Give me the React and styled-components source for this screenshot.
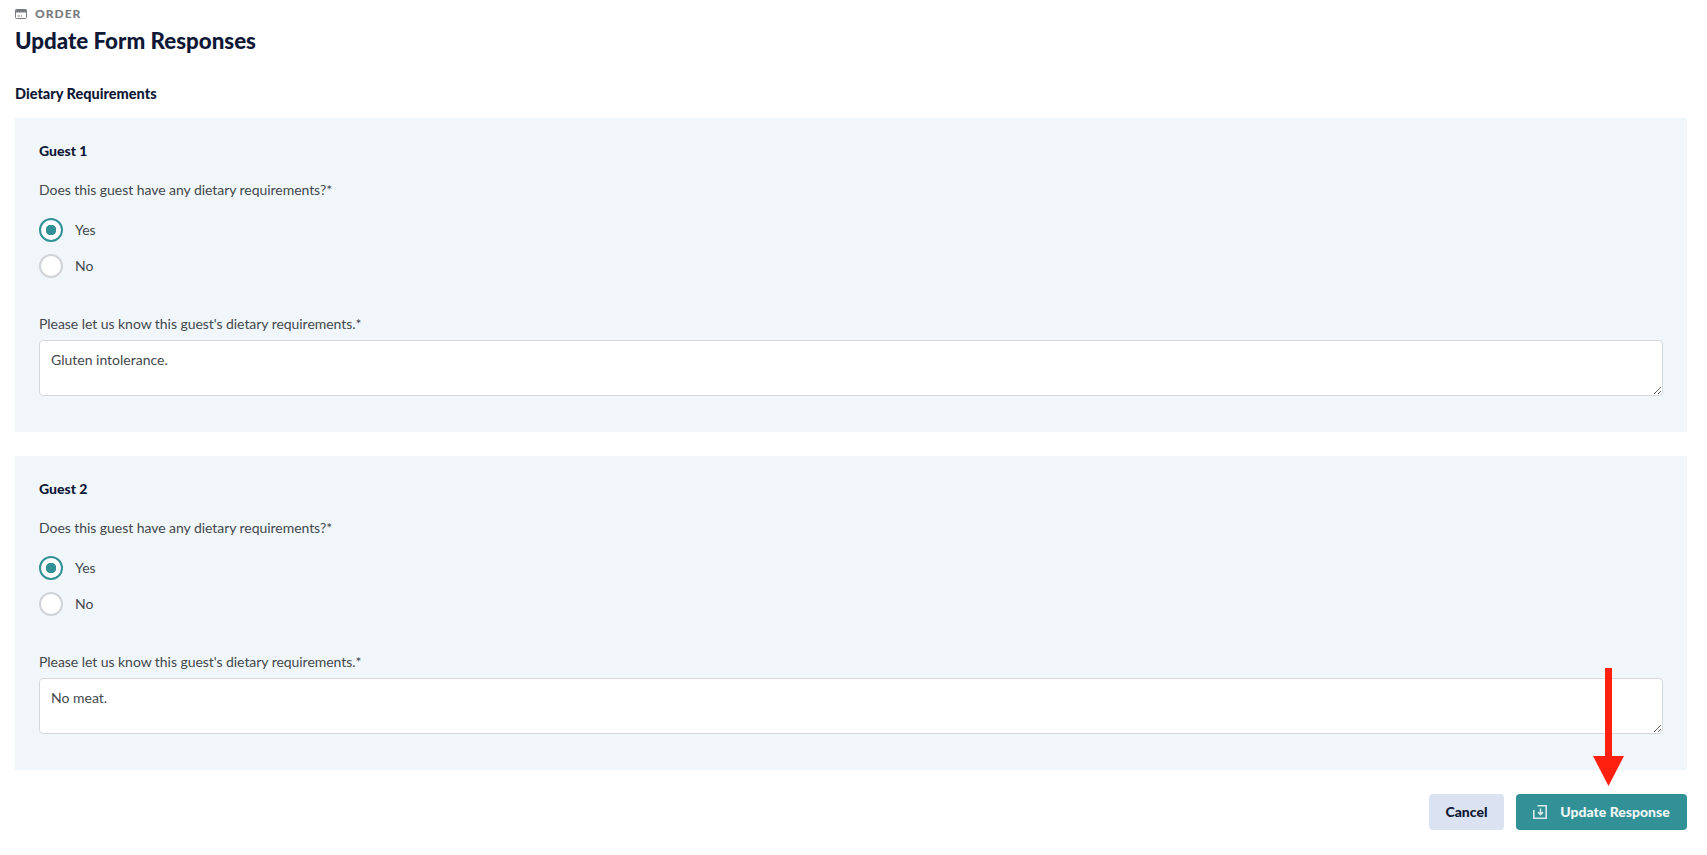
import React from 'react';
import styled, { createGlobalStyle } from 'styled-components';

const GlobalStyle = createGlobalStyle`
  html, body {
    margin: 0;
    padding: 0;
    background: #fff;
    font-family: 'Lato', sans-serif;
  }
`;

const guests = [
  { name: 'Guest 1', answer: 'Gluten intolerance.' },
  { name: 'Guest 2', answer: 'No meat.' },
];

function OrderIcon() {
  return (
    <svg width="12" height="10" viewBox="0 0 12 10" fill="none">
      <rect x="0.5" y="0.5" width="11" height="9" rx="1" stroke="#777b80" />
      <rect x="0.5" y="0.5" width="11" height="3" fill="#777b80" />
      <path d="M2.5 7h2.5M6 7h1" stroke="#777b80" />
    </svg>
  );
}

function SaveIcon() {
  return (
    <svg width="14" height="14" viewBox="0 0 14 14" fill="none" stroke="#d8eaeb" strokeWidth="1.6">
      <path d="M4.5 .8h8.7v12.4H.8V5" />
      <path d="M7.5 3.5v6M5 7.2l2.5 2.4L10 7.2" />
    </svg>
  );
}

function Radio({ label, checked }) {
  return (
    <RadioRow>
      <RadioCircle $checked={checked} />
      <RadioLabel>{label}</RadioLabel>
    </RadioRow>
  );
}

function GuestCard({ name, answer }) {
  return (
    <Card>
      <GuestName>{name}</GuestName>
      <Label>Does this guest have any dietary requirements?*</Label>
      <RadioGroup>
        <Radio label="Yes" checked />
        <Radio label="No" />
      </RadioGroup>
      <Label>Please let us know this guest's dietary requirements.*</Label>
      <Answer defaultValue={answer} />
    </Card>
  );
}

export default function App() {
  return (
    <Page>
      <GlobalStyle />
      <Eyebrow>
        <OrderIcon />
        <span>ORDER</span>
      </Eyebrow>
      <Title>Update Form Responses</Title>
      <SectionTitle>Dietary Requirements</SectionTitle>
      <Cards>
        {guests.map((guest) => (
          <GuestCard key={guest.name} name={guest.name} answer={guest.answer} />
        ))}
      </Cards>
      <Actions>
        <CancelButton>Cancel</CancelButton>
        <SubmitButton>
          <SaveIcon />
          <span>Update Response</span>
        </SubmitButton>
        <Arrow viewBox="0 0 31 118" width="31" height="118">
          <rect x="12" y="0" width="7" height="90" fill="#ff2010" />
          <polygon points="0,88 31,88 15.5,118" fill="#ff2010" />
        </Arrow>
      </Actions>
    </Page>
  );
}

const Page = styled.div`
  padding: 6px 20px 25px 15px;
  color: #0f1836;
`;

const Eyebrow = styled.div`
  display: flex;
  align-items: center;
  gap: 8px;
  height: 15px;
  font-size: 12px;
  font-weight: 900;
  letter-spacing: 1px;
  color: #777b80;
`;

const Title = styled.h1`
  margin: 4px 0 0;
  font-size: 22.3px;
  line-height: 32px;
  font-weight: 900;
`;

const SectionTitle = styled.h2`
  margin: 26px 0 0;
  font-size: 14.5px;
  line-height: 22px;
  font-weight: 900;
`;

const Cards = styled.div`
  display: flex;
  flex-direction: column;
  gap: 24px;
  margin-top: 13px;
`;

const Card = styled.section`
  background: #f1f6fb;
  padding: 24px 24px 36px;
`;

const GuestName = styled.h3`
  margin: -1px 0 19px;
  font-size: 14px;
  line-height: 20px;
  font-weight: 900;
`;

const Label = styled.div`
  font-size: 14px;
  line-height: 20px;
  letter-spacing: -0.05px;
  color: #43484d;
`;

const RadioGroup = styled.div`
  display: flex;
  flex-direction: column;
  gap: 12px;
  margin: 18px 0 36px;
`;

const RadioRow = styled.div`
  display: flex;
  align-items: center;
  gap: 12px;
`;

const RadioCircle = styled.span`
  box-sizing: border-box;
  width: 24px;
  height: 24px;
  border-radius: 50%;
  border: 2px solid ${(p) => (p.$checked ? '#329196' : '#d0d3d7')};
  background: ${(p) =>
    p.$checked ? 'radial-gradient(circle, #329196 0 5px, #fff 5.5px)' : '#fff'};
`;

const RadioLabel = styled.span`
  margin-top: -2px;
  font-size: 14px;
  color: #43484d;
`;

const Answer = styled.textarea`
  display: block;
  box-sizing: border-box;
  width: 100%;
  height: 56px;
  margin-top: 6px;
  padding: 9px 11px;
  border: 1px solid #d5d8dc;
  border-radius: 4px;
  background: #fff;
  font-family: 'Lato', sans-serif;
  font-size: 14px;
  line-height: 20px;
  color: #43484d;
  outline: none;
`;

const Actions = styled.div`
  position: relative;
  display: flex;
  justify-content: flex-end;
  gap: 12px;
  margin-top: 24px;
`;

const BaseButton = styled.button`
  display: flex;
  align-items: center;
  justify-content: center;
  height: 36px;
  padding: 0 0 2px;
  border: none;
  border-radius: 4px;
  font-family: 'Lato', sans-serif;
  font-size: 14px;
  font-weight: 900;
`;

const CancelButton = styled(BaseButton)`
  width: 75px;
  background: #dbe3f3;
  color: #0f1836;
`;

const SubmitButton = styled(BaseButton)`
  width: 171px;
  gap: 13px;
  background: #329196;
  color: #eef6f6;

  svg {
    margin-top: 2px;
  }
`;

const Arrow = styled.svg`
  position: absolute;
  right: 63px;
  bottom: 44px;
`;
